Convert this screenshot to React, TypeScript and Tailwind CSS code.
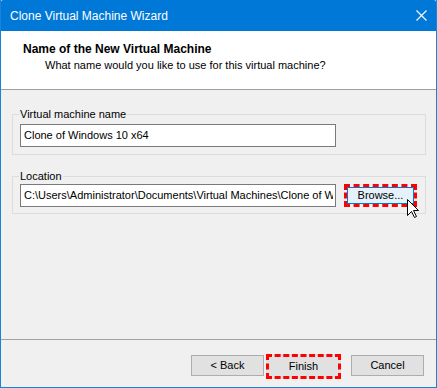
import React from "react";

const font = { fontFamily: '"Liberation Sans", Arial, sans-serif' };

export default function App() {
  return (
    <div
      className="w-[437px] h-[388px] flex flex-col bg-[#f0f0f0] border-x border-b border-[#1883d7] text-black overflow-hidden"
      style={font}
    >
      {/* Title bar */}
      <div className="h-[31px] shrink-0 bg-[#0078d7] flex items-center justify-between pl-[9px] pr-[9px] rounded-tl-[2px] rounded-tr-[2px]">
        <span className="text-white text-[12px] leading-none">Clone Virtual Machine Wizard</span>
        <svg width="11" height="11" viewBox="0 0 11 11">
          <path d="M0.5 0.5 L10.5 10.5 M10.5 0.5 L0.5 10.5" stroke="#ffffff" strokeWidth="1.1" fill="none" />
        </svg>
      </div>

      {/* Header */}
      <div className="h-[59px] shrink-0 bg-white border-b border-[#a0a0a0] pl-[22px] pt-[11px]">
        <div className="text-[12px] font-bold leading-[14px]">Name of the New Virtual Machine</div>
        <div className="text-[11px] leading-[14px] pl-[22px] mt-[2px]">
          What name would you like to use for this virtual machine?
        </div>
      </div>

      {/* Body */}
      <div className="flex-1 flex flex-col pl-[11px] pr-[10px]">
        <fieldset className="mt-[17px] border border-[#dcdcdc] px-[7px] pb-[7px] pt-[3px]">
          <legend className="ml-[-1px] px-[1px] text-[11px] leading-[14px]">Virtual machine name</legend>
          <div className="w-[316px] h-[23px] bg-white border border-[#7a7a7a] flex items-center pl-[3px] text-[11px] whitespace-nowrap overflow-hidden">
            Clone of Windows 10 x64
          </div>
        </fieldset>

        <fieldset className="mt-[14px] border border-[#dcdcdc] px-[7px] pb-[6px] pt-[1px]">
          <legend className="ml-[-1px] px-[1px] text-[11px] leading-[14px]">Location</legend>
          <div className="flex items-center">
            <div className="w-[316px] h-[23px] bg-white border border-[#7a7a7a] pl-[3px] text-[11px] overflow-hidden">
              <div className="w-[309px] h-full flex items-center whitespace-nowrap overflow-hidden">
                C:\Users\Administrator\Documents\Virtual Machines\Clone of Windows 10 x64
              </div>
            </div>
            <div className="relative ml-[8px] w-[73px] h-[23px] border-[3px] border-dashed border-[#ff0000]">
              <div className="w-full h-full bg-[#e5f1fb] border border-[#0078d7] flex items-center justify-center text-[11px]">
                Browse...
              </div>
              <svg
                width="13"
                height="20"
                viewBox="0 0 13 20"
                className="absolute left-[60px] top-[12px] z-10"
              >
                <path
                  d="M0.5 0.5 L0.5 16.5 L4.5 12.5 L7.5 18.5 L9.5 17.5 L6.5 11.5 L11.5 11.5 Z"
                  fill="#ffffff"
                  stroke="#000000"
                  strokeWidth="1"
                />
              </svg>
            </div>
          </div>
        </fieldset>
      </div>

      {/* Footer */}
      <div className="shrink-0 border-t border-[#a0a0a0] h-[48px] flex items-start justify-end pr-[12px] pt-[14px]">
        <div className="w-[73px] h-[21px] mt-[1px] bg-[#e1e1e1] border border-[#adadad] flex items-center justify-center text-[11px]">
          &lt; Back
        </div>
        <div className="ml-[2px] w-[75px] h-[25px] bg-[#e1e1e1] border-[3px] border-dashed border-[#ff0000] flex items-center justify-center text-[11px]">
          Finish
        </div>
        <div className="ml-[10px] w-[73px] h-[21px] mt-[1px] bg-[#e1e1e1] border border-[#adadad] flex items-center justify-center text-[11px]">
          Cancel
        </div>
      </div>
    </div>
  );
}
